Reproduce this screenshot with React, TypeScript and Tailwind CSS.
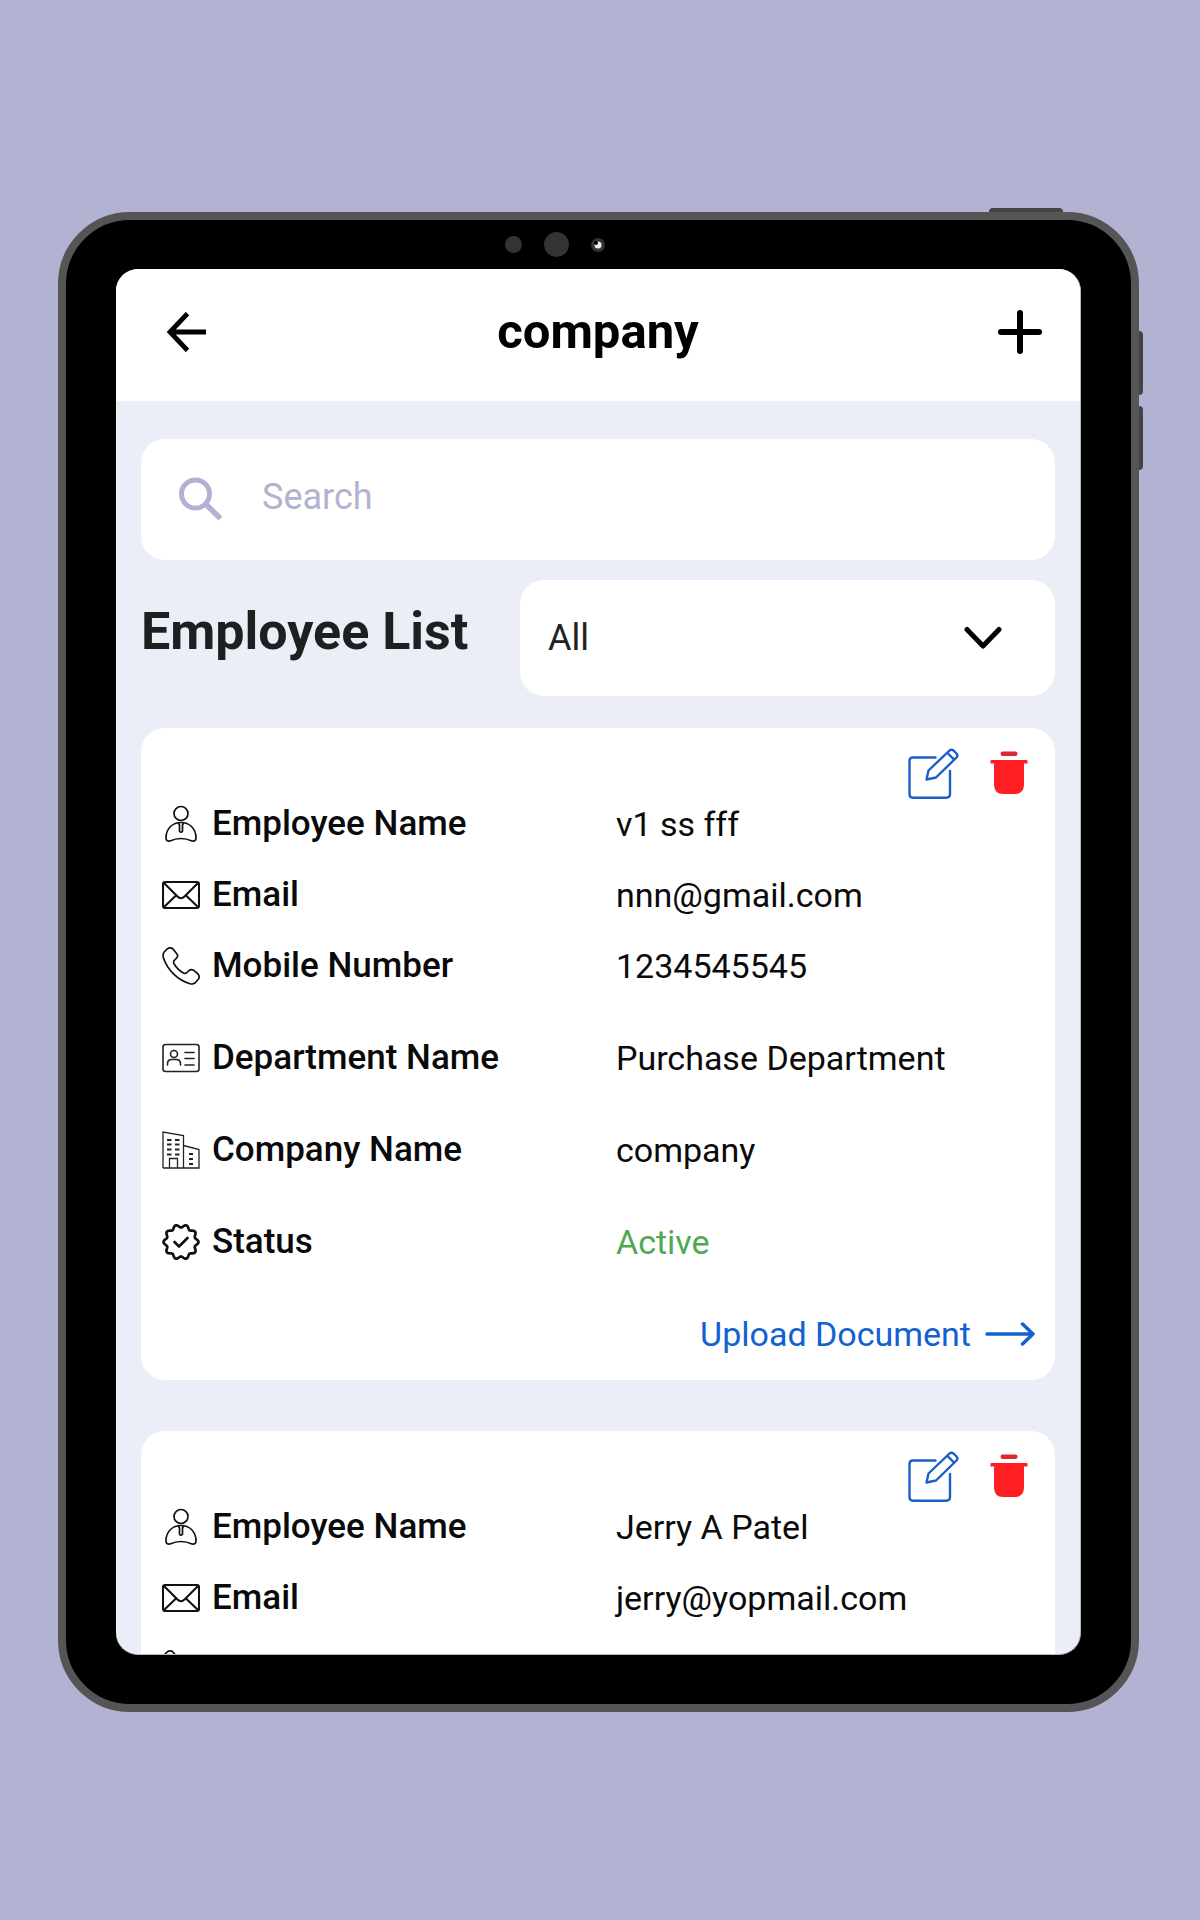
import React from "react";

type Field = { icon: React.ReactNode; label: string; value: string; tone?: string; spaced?: boolean };

const iconClass = "h-[38px] w-[38px] shrink-0";

function PersonIcon() {
  return (
    <svg className={iconClass} viewBox="0 0 38 38" fill="none" stroke="#111" strokeWidth="1.7" strokeLinejoin="round" aria-hidden="true">
      <circle cx="19" cy="8.5" r="7" />
      <path d="M19 17.500C11 17.500 4 23 4 33Q4 36.600 8 36C15 32.800 23 32.800 30 36Q34 36.600 34 33C34 23 27 17.500 19 17.500Z" />
      <path d="M16.500 18L17.500 20V26Q19 28.500 20.500 26V20L21.500 18" />
    </svg>
  );
}

function MailIcon() {
  return (
    <svg className={iconClass} viewBox="0 0 38 38" fill="none" stroke="#111" strokeWidth="2.1" strokeLinejoin="round" aria-hidden="true">
      <rect x="1" y="6" width="36" height="26" rx="2" />
      <path d="M2 7L15.5 20.5Q19 24 22.5 20.5L36 7M2 31L14 19.5M36 31L24 19.5" />
    </svg>
  );
}

function PhoneIcon() {
  return (
    <svg className={iconClass} viewBox="0 0 38 38" fill="none" stroke="#111" strokeWidth="1.7" strokeLinejoin="round" aria-hidden="true">
      <path d="M5 2.2Q8 -.2 11 2L15 7Q16.5 9.200 14.500 11.200L12.200 13.500Q11 15 12.200 17C14.500 21 17.500 24 21.500 26Q23.500 27 25 25.500L27 23.500Q29 22 31.500 23.200L36 27Q38 29.500 36.500 32L33 36Q31 37.500 28 36.700C16 33.500 5.500 23 1.500 11Q.3 7 2.200 5Z" />
    </svg>
  );
}

function IdCardIcon() {
  return (
    <svg className={iconClass} viewBox="0 0 38 38" fill="none" stroke="#222" strokeWidth="1.600" strokeLinecap="round" aria-hidden="true">
      <rect x="1" y="5.500" width="36" height="27" rx="2.500" />
      <circle cx="12" cy="15" r="3.500" />
      <path d="M5.500 26V25Q5.500 20.500 9.500 20.500H14.500Q18.500 20.500 18.500 25V26M23 13.500H32M23 19.500H32M23 26H32" />
    </svg>
  );
}

function BuildingIcon() {
  return (
    <svg className={iconClass} viewBox="0 0 38 38" fill="none" stroke="#222" strokeWidth="1.300" aria-hidden="true">
      <path d="M1 37V1L21.500 4.500V37M21.500 14.500L37 18.500V37H1M7.500 37V27.500H15.500V37" />
      <path strokeWidth="1.800" d="M5 9H9.500M13 9H17.500M5 13.500H9.500M13 13.500H17.500M5 18.500H9.500M13 18.500H17.500M5 23.500H9.500M13 23.500H17.500M27 23H31M27 28H31M27 33H31" />
    </svg>
  );
}

// Ten-lobed seal outline, sampled every three degrees.
const sealPoints = Array.from({ length: 120 }, (_, i) => {
  const angle = (i * Math.PI) / 60;
  const radius = 16 + 1.5 * Math.cos(10 * angle);
  return `${(19 + radius * Math.cos(angle)).toFixed(2)},${(19 + radius * Math.sin(angle)).toFixed(2)}`;
}).join(" ");

function SealIcon() {
  return (
    <svg className={iconClass} viewBox="0 0 38 38" fill="none" stroke="#111" strokeWidth="2.700" strokeLinejoin="round" strokeLinecap="round" aria-hidden="true">
      <polygon points={sealPoints} />
      <path d="M12.500 19L17 23.500L25.500 15" />
    </svg>
  );
}

function EditIcon() {
  return (
    <svg className="h-[51px] w-[51px]" viewBox="0 0 51 51" fill="none" stroke="#1a5fc8" strokeWidth="2.400" strokeLinejoin="round" strokeLinecap="round" aria-hidden="true">
      <path d="M27.500 9.500H5Q1.500 9.500 1.500 13V46Q1.500 49.700 5 49.700H38Q42 49.700 42 46V23" />
      <path d="M18.500 31.500L20.500 22.500L41.500 2.500Q43.500 .8 45.500 2.500L48.500 5.500Q50.300 7.500 48.500 9.500L28 29.500Z" />
      <path d="M39.500 5L46 11.500" />
    </svg>
  );
}

function TrashIcon() {
  return (
    <svg className="h-11 w-[38px]" viewBox="0 0 38 44" aria-hidden="true">
      <rect x="10.500" y="0.500" width="17" height="4.500" rx="2.200" fill="#dc2833" />
      <path fill="#ff1e22" d="M1.500 9H36.500Q37.500 9 37.500 10V12.500H34V34Q33.500 43 25 43H13Q4.500 43 4 34V12.500H.5V10Q.5 9 1.500 9Z" />
    </svg>
  );
}

function EmployeeCard({ fields }: { fields: Field[] }) {
  return (
    <article className="rounded-3xl bg-white pt-5 pr-5 pb-[26px] pl-[21px]">
      <div className="flex items-start justify-end gap-[31px] pr-[7px]">
        <button type="button" aria-label="Edit employee">
          <EditIcon />
        </button>
        <button type="button" aria-label="Delete employee" className="pt-[3px]">
          <TrashIcon />
        </button>
      </div>
      <dl className="mt-[5px]">
        {fields.map((f) => (
          <div key={f.label} className={f.spaced ? "mt-[52px] grid grid-cols-[52%_48%]" : "mt-[31px] grid grid-cols-[52%_48%] first:mt-0"}>
            <dt className="flex items-center gap-3 text-[35px] leading-10 font-medium whitespace-nowrap">
              {f.icon}
              {f.label}
            </dt>
            <dd className={f.tone}>{f.value}</dd>
          </div>
        ))}
      </dl>
      <a href="#upload" className="mt-[52px] flex items-center justify-end gap-[14px] text-[#1261d0]">
        Upload Document
        <svg className="h-6 w-[50px]" viewBox="0 0 50 24" fill="none" stroke="currentColor" strokeWidth="3.500" strokeLinecap="round" strokeLinejoin="round" aria-hidden="true">
          <path d="M2 12H47.500M37.500 2L48 12L37.500 22" />
        </svg>
      </a>
    </article>
  );
}

const first: Field[] = [
  { icon: <PersonIcon />, label: "Employee Name", value: "v1 ss fff" },
  { icon: <MailIcon />, label: "Email", value: "nnn@gmail.com" },
  { icon: <PhoneIcon />, label: "Mobile Number", value: "1234545545" },
  { icon: <IdCardIcon />, label: "Department Name", value: "Purchase Department", spaced: true },
  { icon: <BuildingIcon />, label: "Company Name", value: "company", spaced: true },
  { icon: <SealIcon />, label: "Status", value: "Active", tone: "text-[#4fa954]", spaced: true },
];

const second: Field[] = [
  { icon: <PersonIcon />, label: "Employee Name", value: "Jerry A Patel" },
  { icon: <MailIcon />, label: "Email", value: "jerry@yopmail.com" },
  { icon: <PhoneIcon />, label: "Mobile Number", value: "1234545545" },
];

export default function App() {
  return (
    <div className="min-h-screen bg-[#b2b2d3] pt-[212px] pr-[61px] pb-[208px] pl-[58px] font-['Roboto',sans-serif] text-[34px] leading-10 text-[#0a0a0a]">
      <div className="relative rounded-[72px] border-8 border-[#555] bg-black px-[50px] pt-[49px] pb-[49px]">
        <span className="absolute -top-3 right-[68px] h-1 w-[74px] rounded-t-sm bg-[#444]" />
        <span className="absolute top-[111px] -right-3 h-16 w-1 rounded-r-sm bg-[#444]" />
        <span className="absolute top-[186px] -right-3 h-16 w-1 rounded-r-sm bg-[#444]" />
        <div className="absolute inset-x-0 top-3 flex items-center justify-center gap-[22px] pr-[87px]">
          <span className="h-[17px] w-[17px] rounded-full bg-[#333]" />
          <span className="h-[25px] w-[25px] rounded-full bg-[#333]" />
          <svg className="h-[14px] w-[14px]" viewBox="0 0 14 14" aria-hidden="true">
            <circle cx="7" cy="7" r="7" fill="#333" />
            <circle cx="7" cy="7" r="3.500" fill="#eee" />
            <circle cx="5" cy="5" r="2" fill="#000" />
          </svg>
        </div>

        <main className="aspect-[965/1386] overflow-hidden rounded-[22px] border-r border-b border-[#b2b2d3] bg-[#ebeef6]">
          <header className="grid h-[132px] grid-cols-[1fr_auto_1fr] items-center bg-white px-[38px] pb-1.5">
            <button type="button" aria-label="Back" className="ml-3 justify-self-start">
              <svg className="h-10 w-10" viewBox="0 0 40 40" fill="none" stroke="#000" strokeWidth="4.800" aria-hidden="true">
                <path d="M40 20H4M21.500 1.500L4 20L21.500 38.500" />
              </svg>
            </button>
            <h1 className="text-[49px] leading-[56px] font-bold text-black">company</h1>
            <button type="button" aria-label="Add employee" className="justify-self-end">
              <svg className="h-11 w-11" viewBox="0 0 44 44" fill="none" stroke="#000" strokeWidth="6" strokeLinecap="round" aria-hidden="true">
                <path d="M22 3V41M3 22H41" />
              </svg>
            </button>
          </header>

          <div className="px-[25px] pt-[38px]">
            <label className="flex h-[121px] items-center gap-[39px] rounded-3xl bg-white pr-8 pb-0.5 pl-[38px]">
              <svg className="h-11 w-11 shrink-0" viewBox="0 0 44 44" fill="none" stroke="#b2b2d3" aria-hidden="true">
                <circle cx="16.500" cy="17" r="14" strokeWidth="5" />
                <path d="M27.500 28L41.500 41.500" strokeWidth="5.500" />
              </svg>
              <input type="text" aria-label="Search" placeholder="Search" className="w-full min-w-0 pb-1 text-[36px] leading-[44px] outline-none placeholder:text-[#b2b2d3]" />
            </label>

            <div className="mt-5 flex items-center justify-between">
              <h2 className="pb-3 text-[52px] leading-[60px] font-bold text-[#1c2020]">Employee List</h2>
              <div className="relative w-[535px]">
                <select aria-label="Employee filter" className="h-[116px] w-full appearance-none rounded-3xl bg-white pr-24 pl-7 text-[36px] text-[#222] outline-none">
                  <option>All</option>
                </select>
                <svg className="pointer-events-none absolute top-[46px] right-[52px] h-6 w-10" viewBox="0 0 40 24" fill="none" stroke="#000" strokeWidth="5" strokeLinecap="round" strokeLinejoin="round" aria-hidden="true">
                  <path d="M4 3.500L20 20L36 3.500" />
                </svg>
              </div>
            </div>

            <section aria-label="Employees" className="mt-8 flex flex-col gap-[51px]">
              <EmployeeCard fields={first} />
              <EmployeeCard fields={second} />
            </section>
          </div>
        </main>
      </div>
    </div>
  );
}
